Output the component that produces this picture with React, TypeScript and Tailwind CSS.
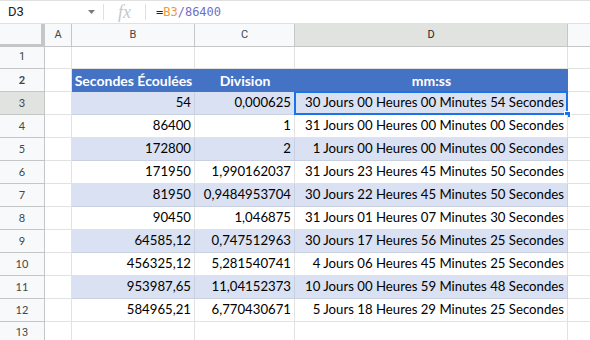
import React from 'react';

const rows: [string, string, string][] = [
  ['54', '0,000625', '30 Jours 00 Heures 00 Minutes 54 Secondes'],
  ['86400', '1', '31 Jours 00 Heures 00 Minutes 00 Secondes'],
  ['172800', '2', '1 Jours 00 Heures 00 Minutes 00 Secondes'],
  ['171950', '1,990162037', '31 Jours 23 Heures 45 Minutes 50 Secondes'],
  ['81950', '0,9484953704', '30 Jours 22 Heures 45 Minutes 50 Secondes'],
  ['90450', '1,046875', '31 Jours 01 Heures 07 Minutes 30 Secondes'],
  ['64585,12', '0,747512963', '30 Jours 17 Heures 56 Minutes 25 Secondes'],
  ['456325,12', '5,281540741', '4 Jours 06 Heures 45 Minutes 25 Secondes'],
  ['953987,65', '11,04152373', '10 Jours 00 Heures 59 Minutes 48 Secondes'],
  ['584965,21', '6,770430671', '5 Jours 18 Heures 29 Minutes 25 Secondes'],
];

const RowHead = ({ n, active }: { n: number; active?: boolean }) => (
  <div
    className={`w-[45px] shrink-0 h-full flex items-center justify-center border-r border-b border-[#c4c7c5] text-[11px] text-[#444746] ${
      active ? 'bg-[#e1e3e1]' : 'bg-[#f8f9fa]'
    }`}
  >
    {n}
  </div>
);

export default function App() {
  return (
    <div className="w-[590px] h-[340px] overflow-hidden bg-white font-['Roboto',sans-serif] relative">
      {/* formula bar */}
      <div className="h-[24px] border-t border-b border-[#e0e0e0] flex items-center">
        <div className="w-[103px] flex items-center justify-between pl-[8px] pr-[8px] text-[13px] text-[#202124]">
          <span>D3</span>
          <svg width="7" height="4" viewBox="0 0 7 4">
            <path d="M0 0h7L3.5 4z" fill="#7a7a7a" />
          </svg>
        </div>
        <div className="w-px h-[16px] bg-[#e0e0e0]" />
        <div className="w-[41px] flex items-center justify-center">
          <span className="font-['Liberation_Serif',serif] italic text-[18px] text-[#c8c8c8] leading-none">fx</span>
        </div>
        <div className="w-px h-[16px] bg-[#e0e0e0]" />
        <div className="pl-[10px] font-['DejaVu_Sans_Mono',monospace] text-[12px] text-[#202124]">
          =<span className="text-[#f5953b]">B3</span>
          <span className="text-[#6f6fc5]">/86400</span>
        </div>
      </div>

      {/* column headers */}
      <div className="h-[23px] flex text-[11px] text-[#444746]">
        <div className="w-[45px] shrink-0 bg-[#f8f9fa] border-r-[4px] border-b-[3px] border-[#c4c7c5]" />
        <div className="w-[27px] shrink-0 flex items-center justify-center bg-[#f8f9fa] border-r border-b border-[#c4c7c5]">A</div>
        <div className="w-[123px] shrink-0 flex items-center justify-center bg-[#f8f9fa] border-r border-b border-[#c4c7c5]">B</div>
        <div className="w-[100px] shrink-0 flex items-center justify-center bg-[#f8f9fa] border-r border-b border-[#c4c7c5]">C</div>
        <div className="w-[273px] shrink-0 flex items-center justify-center bg-[#e1e3e1] border-r border-b border-[#c4c7c5] text-[#1f1f1f]">D</div>
        <div className="flex-1 bg-[#f8f9fa] border-b border-[#c4c7c5]" />
      </div>

      {/* row 1 */}
      <div className="h-[22px] flex">
        <RowHead n={1} />
        <div className="w-[27px] shrink-0 border-r border-b border-[#e2e2e2]" />
        <div className="w-[123px] shrink-0 border-r border-b border-[#e2e2e2]" />
        <div className="w-[100px] shrink-0 border-r border-b border-[#e2e2e2]" />
        <div className="w-[273px] shrink-0 border-r border-b border-[#e2e2e2]" />
        <div className="flex-1 border-b border-[#e2e2e2]" />
      </div>

      {/* row 2 header */}
      <div className="h-[23px] flex font-['Lato',sans-serif] text-[14px] font-bold text-white whitespace-nowrap">
        <RowHead n={2} />
        <div className="w-[27px] shrink-0 border-r border-b border-[#e2e2e2]" />
        <div className="w-[123px] shrink-0 bg-[#4472c4] flex items-center justify-center">Secondes Écoulées</div>
        <div className="w-[100px] shrink-0 bg-[#4472c4] flex items-center justify-center">Division</div>
        <div className="w-[273px] shrink-0 bg-[#4472c4] flex items-center justify-center">mm:ss</div>
        <div className="flex-1 border-b border-[#e2e2e2]" />
      </div>

      {rows.map((r, i) => {
        const band = i % 2 === 0;
        const bg = band ? 'bg-[#d9e1f2] border-[#c9d0e0]' : 'bg-white border-[#e2e2e2]';
        const active = i === 0;
        return (
          <div key={i} className="h-[23px] flex font-['Lato',sans-serif] text-[13.2px] text-black whitespace-nowrap">
            <RowHead n={i + 3} active={active} />
            <div className="w-[27px] shrink-0 border-r border-b border-[#e2e2e2]" />
            <div className={`w-[123px] shrink-0 border-r border-b ${bg} flex items-center justify-end pr-[3px]`}>{r[0]}</div>
            <div className={`w-[100px] shrink-0 border-r border-b ${bg} flex items-center justify-end pr-[3px]`}>{r[1]}</div>
            <div className={`w-[273px] shrink-0 border-r border-b ${bg} flex items-center justify-end pr-[3px] relative`}>
              {r[2]}
              {active && (
                <>
                  <div className="absolute -left-[1px] -top-[1px] right-[-1px] bottom-[-1px] border-2 border-[#1a73e8]" />
                  <div className="absolute right-[-4px] bottom-[-4px] w-[7px] h-[7px] bg-[#1a73e8] border border-white" />
                </>
              )}
            </div>
            <div className="flex-1 border-b border-[#e2e2e2]" />
          </div>
        );
      })}

      {/* row 13 */}
      <div className="h-[23px] flex">
        <RowHead n={13} />
        <div className="w-[27px] shrink-0 border-r border-b border-[#e2e2e2]" />
        <div className="w-[123px] shrink-0 border-r border-b border-[#e2e2e2]" />
        <div className="w-[100px] shrink-0 border-r border-b border-[#e2e2e2]" />
        <div className="w-[273px] shrink-0 border-r border-b border-[#e2e2e2]" />
        <div className="flex-1 border-b border-[#e2e2e2]" />
      </div>
    </div>
  );
}
